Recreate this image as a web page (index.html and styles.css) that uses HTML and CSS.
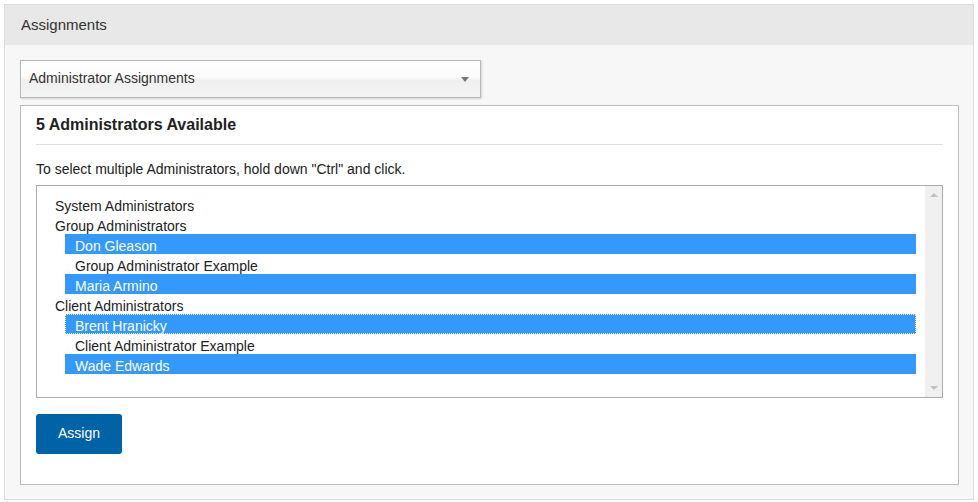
FILE: index.html
```html
<!DOCTYPE html>
<html>
<head>
<meta charset="utf-8">
<link rel="stylesheet" href="styles.css">
</head>
<body>
<div class="panel">
  <div class="panel-header">Assignments</div>
  <div class="panel-body">
    <div class="dropdown">
      <span class="dropdown-label">Administrator Assignments</span>
      <span class="dropdown-arrow"></span>
    </div>
    <div class="card">
      <h3 class="card-title">5 Administrators Available</h3>
      <div class="rule"></div>
      <p class="hint">To select multiple Administrators, hold down "Ctrl" and click.</p>
      <div class="listbox">
        <div class="list">
          <div class="group">System Administrators</div>
          <div class="group">Group Administrators</div>
          <div class="option selected">Don Gleason</div>
          <div class="option">Group Administrator Example</div>
          <div class="option selected">Maria Armino</div>
          <div class="group">Client Administrators</div>
          <div class="option selected focused">Brent Hranicky</div>
          <div class="option">Client Administrator Example</div>
          <div class="option selected">Wade Edwards</div>
        </div>
        <div class="scrollbar">
          <span class="arrow-up"></span>
          <span class="arrow-down"></span>
        </div>
      </div>
      <button class="btn">Assign</button>
    </div>
  </div>
</div>
</body>
</html>
```

FILE: styles.css
```css
html, body {
  margin: 0;
  padding: 0;
  background: #ffffff;
  font-family: "Liberation Sans", Arial, sans-serif;
  color: #222;
}

.panel {
  margin: 4px 4px 0 4px;
  width: 968px;
  border: 1px solid #dcdcdc;
  background: #f7f7f7;
}

.panel-header {
  height: 40px;
  line-height: 40px;
  padding: 0 16px;
  background: #e8e8e8;
  font-size: 15px;
  color: #333;
}

.panel-body {
  padding: 15px 14px 14px 15px;
}

.dropdown {
  border: 1px solid #b9b9b9;
  background: linear-gradient(#ffffff 0%, #fbfbfb 45%, #efefef 55%, #f4f4f4 100%);
  box-shadow: 1px 1px 2px rgba(0, 0, 0, 0.15);
  display: flex;
  align-items: center;
  justify-content: space-between;
  padding: 0 11px 2px 8px;
  box-sizing: content-box;
  width: 440px;
  height: 34px;
}

.dropdown-label {
  font-size: 14px;
  line-height: 16px;
  color: #333;
}

.dropdown-arrow {
  width: 0;
  height: 0;
  border-left: 4px solid transparent;
  border-right: 4px solid transparent;
  border-top: 5px solid #777;
  margin-top: 3px;
}

.card {
  margin-top: 7px;
  background: #ffffff;
  border: 1px solid #bdbdbd;
  padding: 9px 15px 30px 15px;
}

.card-title {
  margin: 0;
  font-size: 16px;
  line-height: 20px;
  font-weight: bold;
  color: #222;
}

.rule {
  margin-top: 9px;
  height: 1px;
  background: #dedede;
}

.hint {
  margin: 14px 0 0 0;
  font-size: 14px;
  line-height: 20px;
  color: #222;
}

.listbox {
  margin-top: 6px;
  height: 211px;
  border: 1px solid #ababab;
  display: flex;
}

.list {
  flex: 1;
  padding: 8px 9px 0 0;
}

.group,
.option {
  box-sizing: border-box;
  height: 20px;
  line-height: 16px;
  padding-top: 4px;
  font-size: 14px;
  color: #222;
}

.group {
  padding-left: 18px;
}

.option {
  margin-left: 28px;
  padding-left: 10px;
}

.option.selected {
  background: #3399ff;
  color: #ffffff;
}

.option.focused {
  outline: 1px dotted #e8f2ff;
  outline-offset: -1px;
}

.scrollbar {
  width: 17px;
  background: #f0f0f0;
  display: flex;
  flex-direction: column;
  justify-content: space-between;
  align-items: center;
  padding: 7px 0 7px 0;
}

.arrow-up {
  width: 0;
  height: 0;
  border-left: 4px solid transparent;
  border-right: 4px solid transparent;
  border-bottom: 4px solid #c2c2c2;
}

.arrow-down {
  width: 0;
  height: 0;
  border-left: 4px solid transparent;
  border-right: 4px solid transparent;
  border-top: 4px solid #c2c2c2;
}

.btn {
  display: block;
  margin-top: 16px;
  width: 86px;
  height: 40px;
  border: none;
  border-radius: 3px;
  background: #0062a7;
  color: #ffffff;
  font-family: "Liberation Sans", Arial, sans-serif;
  font-size: 14px;
  padding: 0 0 3px 0;
}
```
